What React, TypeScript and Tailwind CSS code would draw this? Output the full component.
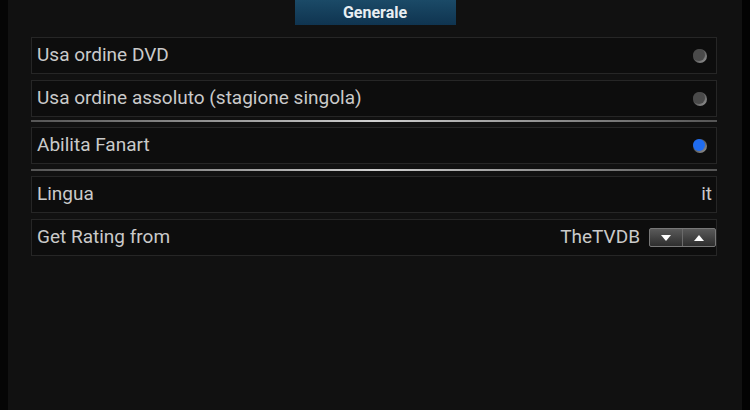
const font = { fontFamily: "Roboto, 'Noto Sans', sans-serif" };

function Radio({ on }: { on?: boolean }) {
  return (
    <div className="relative h-[14px] w-[14px]">
      <div className="absolute inset-0 rounded-full bg-gradient-to-br from-[#2a2a2a] to-[#9a9a9a]" />
      <div
        className={
          "absolute left-0 top-0 h-[12px] w-[12px] rounded-full " +
          (on ? "bg-[#1f6cf0]" : "bg-[#4a4a4a]")
        }
      />
    </div>
  );
}

function Row({ label, className, children }: { label: string; className?: string; children?: React.ReactNode }) {
  return (
    <div
      className={
        "flex h-[37px] items-center justify-between border border-[#262626] bg-[#0d0d0d] pl-[5px] pr-[9px] " +
        (className ?? "")
      }
    >
      <span className="text-[19px] text-[#cacaca]">{label}</span>
      {children}
    </div>
  );
}

function Sep({ className }: { className?: string }) {
  return <div className={"h-[2px] bg-gradient-to-r from-[#555] via-[#d0d0d0] to-[#555] " + (className ?? "")} />;
}

function Spinner() {
  return (
    <div className="flex h-[19px] rounded-[2px] border border-[#777] bg-gradient-to-b from-[#5a5a5a] to-[#2e2e2e]">
      <div className="flex w-[33px] items-center justify-center border-r border-[#6a6a6a]">
        <svg width="12" height="8" viewBox="0 0 12 8">
          <path d="M1 1h10L6 7z" fill="#fff" />
        </svg>
      </div>
      <div className="flex w-[32px] items-center justify-center">
        <svg width="12" height="8" viewBox="0 0 12 8">
          <path d="M1 7h10L6 1z" fill="#fff" />
        </svg>
      </div>
    </div>
  );
}

export default function App() {
  return (
    <div className="flex h-[410px] w-[750px] bg-[#050505]" style={font}>
      <div className="w-[8px] shrink-0 bg-[#050505]" />
      <div className="w-[734px] shrink-0 bg-[#111111]">
        <div className="flex justify-center">
          <div className="flex h-[25px] w-[161px] items-center justify-center bg-gradient-to-b from-[#1b4a67] to-[#0f3450] text-[16px] font-bold text-[#e8eef2]">
            Generale
          </div>
        </div>
        <div className="ml-[23px] mr-[25px] mt-[12px] flex flex-col">
          <Row label="Usa ordine DVD">
            <Radio />
          </Row>
          <Row label="Usa ordine assoluto (stagione singola)" className="mt-[6px]">
            <Radio />
          </Row>
          <Sep className="mt-[3px]" />
          <Row label="Abilita Fanart" className="mt-[5px]">
            <Radio on />
          </Row>
          <Sep className="mt-[5px]" />
          <Row label="Lingua" className="mt-[5px]">
            <span className="-mr-[5px] text-[19px] text-[#cacaca]">it</span>
          </Row>
          <div className="mt-[6px] flex h-[37px] items-center justify-between border border-[#262626] bg-[#0d0d0d] pl-[5px]">
            <span className="text-[19px] text-[#cacaca]">Get Rating from</span>
            <div className="flex items-center gap-[9px]">
              <span className="text-[19px] text-[#cacaca]">TheTVDB</span>
              <Spinner />
            </div>
          </div>
        </div>
      </div>
      <div className="w-[8px] shrink-0 bg-[#030303]" />
    </div>
  );
}
